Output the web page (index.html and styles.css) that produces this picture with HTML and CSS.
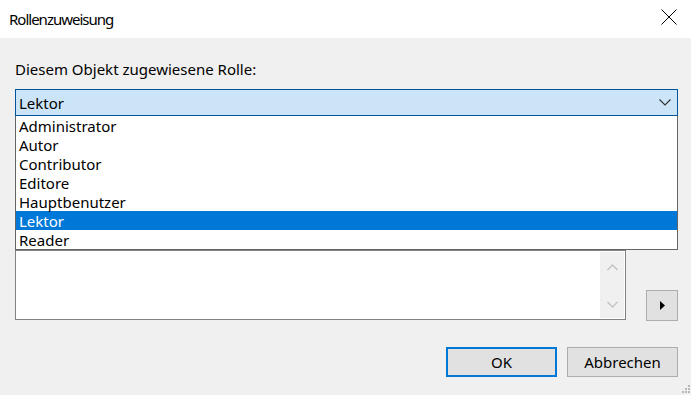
FILE: index.html
```html
<!DOCTYPE html>
<html lang="de">
<head>
    <meta charset="UTF-8">
    <title>Rollenzuweisung</title>
    <link rel="stylesheet" href="styles.css">
</head>
<body>
    <div class="dialog">
        <div class="titlebar">
            <span class="title">Rollenzuweisung</span>
            <svg class="close" width="16" height="16" viewBox="0 0 16 16">
                <path d="M0.5 0.5 L15.5 15.5 M15.5 0.5 L0.5 15.5" stroke="#000" stroke-width="1" fill="none"/>
            </svg>
        </div>
        <div class="content">
            <p class="label">Diesem Objekt zugewiesene Rolle:</p>
            <div class="combo">
                <span>Lektor</span>
                <svg width="12" height="7" viewBox="0 0 12 7">
                    <path d="M0.5 0.5 L6 6 L11.5 0.5" stroke="#333" stroke-width="1.2" fill="none"/>
                </svg>
            </div>
            <div class="list-area">
                <div class="listbox">
                    <div class="list-body"></div>
                    <div class="scrollbar">
                        <svg width="11" height="7" viewBox="0 0 11 7"><path d="M0.5 6 L5.5 1 L10.5 6" stroke="#c2c2c2" stroke-width="1.4" fill="none"/></svg>
                        <svg width="11" height="7" viewBox="0 0 11 7"><path d="M0.5 1 L5.5 6 L10.5 1" stroke="#c2c2c2" stroke-width="1.4" fill="none"/></svg>
                    </div>
                </div>
                <button class="arrow-btn">
                    <svg width="5" height="9" viewBox="0 0 5 9"><path d="M0 0 L5 4.5 L0 9 Z" fill="#000"/></svg>
                </button>

                <!-- aufgeklappte Liste der Combobox -->
                <ul class="dropdown">
                    <li>Administrator</li>
                    <li>Autor</li>
                    <li>Contributor</li>
                    <li>Editore</li>
                    <li>Hauptbenutzer</li>
                    <li class="selected">Lektor</li>
                    <li>Reader</li>
                </ul>
            </div>
            <div class="footer">
                <button class="btn btn-default">OK</button>
                <button class="btn">Abbrechen</button>
            </div>
        </div>
        <div class="grip">
            <i></i><i></i><i></i><i></i><i></i><i></i>
        </div>
    </div>
</body>
</html>
```

FILE: styles.css
```css
body {
    margin: 0;
    font-family: "Noto Sans", "Open Sans", sans-serif;
    font-size: 14px;
    color: #000;
}
.dialog {
    position: relative;
    width: 691px;
    height: 395px;
    background-color: #f0f0f0;
    overflow: hidden;
}
.titlebar {
    height: 38px;
    background-color: #fff;
    display: flex;
    align-items: center;
    justify-content: space-between;
    padding: 0 14px 0 9px;
}
.title {
    font-size: 15px;
    letter-spacing: -1px;
    margin-top: -1px;
}
.close {
    margin-top: -4px;
}
.content {
    padding: 0 13px 0 15px;
}
.label {
    margin: 0;
    padding-top: 21px;
    height: 51px;
    box-sizing: border-box;
    line-height: 20px;
    font-size: 15px;
}
.combo {
    height: 27px;
    box-sizing: border-box;
    border: 1px solid #005499;
    background-color: #cce4f7;
    display: flex;
    align-items: center;
    justify-content: space-between;
    padding: 0 6px 0 3px;
    font-size: 15px;
}
.list-area {
    position: relative;
    display: flex;
    align-items: flex-end;
    gap: 20px;
    height: 204px;
}
.listbox {
    flex: 1;
    height: 70px;
    box-sizing: border-box;
    border: 1px solid #828282;
    background-color: #fff;
    display: flex;
}
.list-body {
    flex: 1;
}
.scrollbar {
    width: 24px;
    margin: 1px 1px 1px 0;
    background-color: #f0f0f0;
    display: flex;
    flex-direction: column;
    justify-content: space-between;
    align-items: center;
    padding: 12px 0 10px;
}
.arrow-btn {
    width: 32px;
    height: 31px;
    border: 1px solid #adadad;
    background-color: #e1e1e1;
    padding: 0;
    margin-bottom: -1px;
    display: flex;
    align-items: center;
    justify-content: center;
}
.dropdown {
    position: absolute;
    top: 0;
    left: 0;
    right: 0;
    margin: 0;
    padding: 0;
    list-style: none;
    background-color: #fff;
    border: 1px solid #646464;
    border-top: none;
    font-size: 15px;
}
.dropdown li {
    height: 19px;
    line-height: 20px;
    padding-left: 3px;
}
.dropdown .selected {
    background-color: #0078d7;
    color: #fff;
}
.footer {
    display: flex;
    justify-content: flex-end;
    gap: 10px;
    margin-top: 27px;
}
.btn {
    width: 111px;
    height: 30px;
    border: 1px solid #adadad;
    background-color: #e1e1e1;
    font-family: inherit;
    font-size: 15px;
    padding: 0;
}
.btn-default {
    border: 2px solid #0078d7;
}
.grip {
    position: absolute;
    right: 1px;
    bottom: 1px;
    width: 9px;
    height: 9px;
}
.grip i {
    position: absolute;
    width: 2px;
    height: 2px;
    background-color: #b8b8b8;
}
.grip i:nth-child(1) { right: 0; top: 0; }
.grip i:nth-child(2) { right: 0; top: 3px; }
.grip i:nth-child(3) { right: 3px; top: 3px; }
.grip i:nth-child(4) { right: 0; top: 6px; }
.grip i:nth-child(5) { right: 3px; top: 6px; }
.grip i:nth-child(6) { right: 6px; top: 6px; }
```
